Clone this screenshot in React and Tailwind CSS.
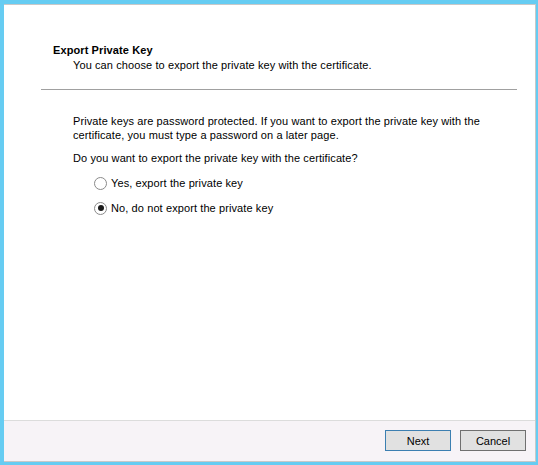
import React, { useState } from "react";

const font = { fontFamily: "'Liberation Sans', Arial, sans-serif" };

function Radio({ checked, label, onClick }) {
  return (
    <label className="flex items-center gap-[4px] h-[16px] cursor-default" onClick={onClick}>
      <span className="w-[13px] h-[13px] rounded-full border border-[#8a8a8a] bg-white flex items-center justify-center">
        {checked && <span className="w-[6px] h-[6px] rounded-full bg-[#1a1a1a]" />}
      </span>
      <span>{label}</span>
    </label>
  );
}

export default function App() {
  const [exportKey, setExportKey] = useState(false);

  return (
    <div
      className="w-[538px] h-[465px] bg-[#66ccf2] pl-[4px] pt-[4px] pr-[2px] pb-[3px] text-[11px] leading-[14px] tracking-[0.1px] text-black"
      style={font}
    >
      <div className="h-full flex flex-col bg-white border-t border-r border-b border-[#c8c8c8]">
        <div className="flex-1 flex flex-col">
          <div className="pt-[38px] pl-[49px]">
            <div className="font-bold">Export Private Key</div>
            <div className="pl-[20px] mt-[1px]">You can choose to export the private key with the certificate.</div>
          </div>

          <div className="mt-[17px] ml-[37px] mr-[18px] h-px bg-[#a0a0a0]" />

          <div className="pl-[69px] pt-[24px]">
            <p>
              Private keys are password protected. If you want to export the private key with the
              <br />
              certificate, you must type a password on a later page.
            </p>
            <p className="mt-[9px]">Do you want to export the private key with the certificate?</p>

            <div className="pl-[21px] mt-[10px] flex flex-col gap-[9px]">
              <Radio checked={exportKey} label="Yes, export the private key" onClick={() => setExportKey(true)} />
              <Radio checked={!exportKey} label="No, do not export the private key" onClick={() => setExportKey(false)} />
            </div>
          </div>
        </div>

        <div className="h-[41px] bg-[#f7f3f7] border-t border-[#dcdcdc] flex items-start justify-end gap-[9px] pt-[9px] pr-[9px]">
          <button className="w-[66px] h-[21px] bg-[#e1e1e1] border border-[#3c7fb1] tracking-normal">Next</button>
          <button className="w-[66px] h-[21px] bg-[#e1e1e1] border border-[#707070] tracking-normal">Cancel</button>
        </div>
      </div>
    </div>
  );
}
